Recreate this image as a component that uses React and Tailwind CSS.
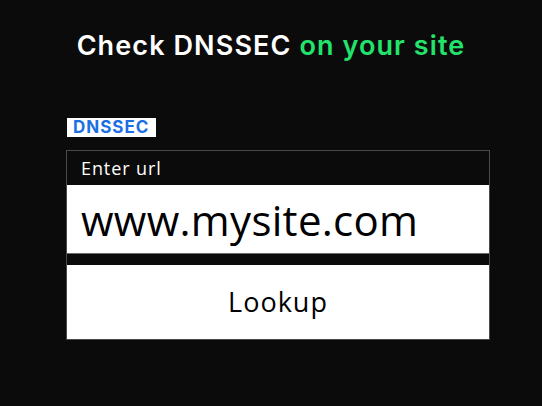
import React from 'react';

export default function App() {
    return (
        <div className="w-[542px] h-[406px] bg-[#0b0b0b] overflow-hidden" style={{ fontFamily: 'Inter, "Noto Sans", sans-serif' }}>
            {/* Heading */}
            <h1 className="pt-[28px] text-center text-[27px] leading-[36px] font-semibold tracking-[1.1px] text-white">
                Check DNSSEC <span className="text-[#22e36c]">on your site</span>
            </h1>

            <div className="ml-[66px] mt-[54px] w-[424px]">
                {/* Badge */}
                <div className="w-fit ml-[1px] bg-white pl-[6px] pr-[7px] h-[19px] text-[17px] leading-[19px] font-bold tracking-[1px] text-[#1b6fe3]">
                    DNSSEC
                </div>

                {/* Form box */}
                <div className="mt-[13px] border border-[#4a4a4a] bg-[#0b0b0b]" style={{ fontFamily: '"Open Sans", "Noto Sans", sans-serif' }}>
                    <div className="h-[34px] flex items-center pl-[14px] text-[18px] tracking-[0.9px] text-white">
                        Enter url
                    </div>
                    <input
                        type="text"
                        defaultValue="www.mysite.com"
                        className="block w-full h-[68px] bg-white px-[14px] text-[42px] tracking-[0.3px] text-black outline-none"
                    />
                    <div className="h-[12px] border-t border-[#6b6b6b]" />
                    <button className="block w-full h-[74px] bg-white text-[27px] tracking-[1px] text-black">
                        Lookup
                    </button>
                </div>
            </div>
        </div>
    );
}
